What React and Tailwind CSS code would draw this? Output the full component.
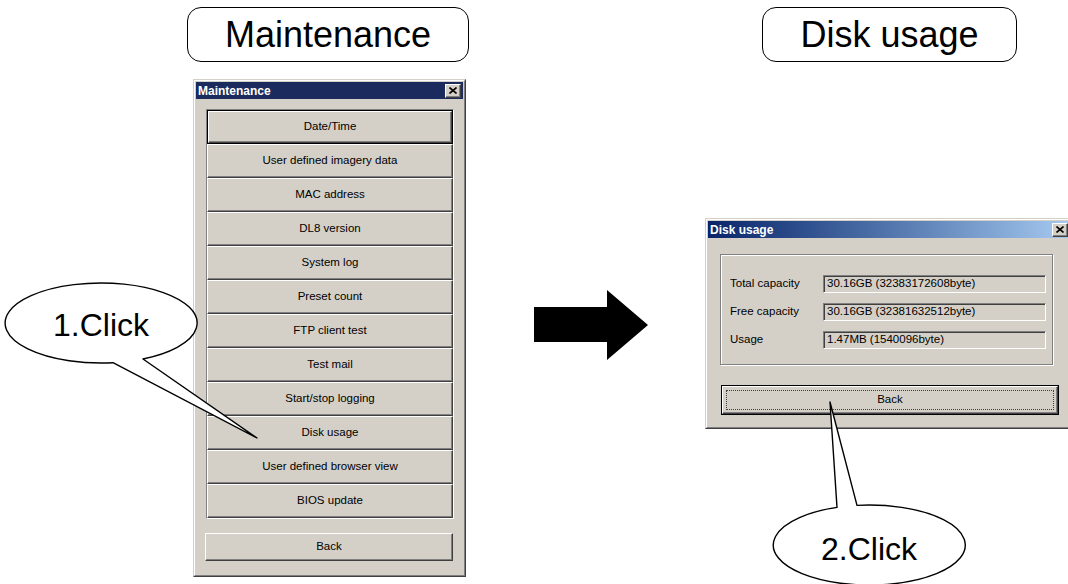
import React from 'react';

const font = "font-['Liberation_Sans',Arial,sans-serif]";

/* classic raised 3D button */
function Btn({ label, def, focus, className = '' }) {
  const face = (
    <div className="flex h-full w-full items-center justify-center bg-[#d4d0c8] border border-t-white border-l-white border-r-[#404040] border-b-[#404040] shadow-[inset_-1px_-1px_0_#808080] text-[11.5px] text-black">
      {focus ? (
        <div className="flex h-[calc(100%-6px)] w-[calc(100%-6px)] items-center justify-center border border-dotted border-[#404040]">
          {label}
        </div>
      ) : (
        label
      )}
    </div>
  );
  if (def) {
    return <div className={`border border-black ${className}`}>{face}</div>;
  }
  return <div className={className}>{face}</div>;
}

function CloseBox() {
  return (
    <div className="flex h-[14px] w-[16px] items-center justify-center bg-[#d4d0c8] border border-t-white border-l-white border-r-[#404040] border-b-[#404040] shadow-[inset_-1px_-1px_0_#808080]">
      <svg width="8" height="7" viewBox="0 0 8 7">
        <path d="M0.5 0.5 L7.5 6.5 M7.5 0.5 L0.5 6.5" stroke="black" strokeWidth="1.6" />
      </svg>
    </div>
  );
}

function Frame({ title, titleBg, className, children }) {
  return (
    <div className={`absolute border border-[#d4d0c8] border-r-[#404040] border-b-[#404040] ${className}`}>
      <div className="flex h-full flex-col border border-white border-r-[#808080] border-b-[#808080] bg-[#d4d0c8] p-px">
        <div className={`flex h-[17px] shrink-0 items-center justify-between pl-[2px] pr-[2px] ${titleBg}`}>
          <span className="text-[12px] font-bold text-white">{title}</span>
          <CloseBox />
        </div>
        {children}
      </div>
    </div>
  );
}

const items = [
  'Date/Time',
  'User defined imagery data',
  'MAC address',
  'DL8 version',
  'System log',
  'Preset count',
  'FTP client test',
  'Test mail',
  'Start/stop logging',
  'Disk usage',
  'User defined browser view',
  'BIOS update',
];

const disk = [
  ['Total capacity', '30.16GB (32383172608byte)'],
  ['Free capacity', '30.16GB (32381632512byte)'],
  ['Usage', '1.47MB (1540096byte)'],
];

export default function App() {
  return (
    <div className={`relative h-[584px] w-[1068px] overflow-hidden bg-white ${font}`}>
      {/* ── Step labels ───────────────────────────────────────── */}
      <div className="absolute left-[187px] top-[7px] flex h-[55px] w-[282px] items-center justify-center rounded-[14px] border-[1.5px] border-black text-[36px] leading-none text-black">
        Maintenance
      </div>
      <div className="absolute left-[762px] top-[7px] flex h-[55px] w-[255px] items-center justify-center rounded-[14px] border-[1.5px] border-black text-[36px] leading-none text-black">
        Disk usage
      </div>

      {/* ── Maintenance window ────────────────────────────────── */}
      <Frame title="Maintenance" titleBg="bg-[#1b2b5d]" className="left-[193px] top-[79px] h-[498px] w-[273px]">
        <div className="ml-[10px] mt-[10px] flex w-[248px] flex-col border border-[#808080] border-r-white border-b-white">
          {items.map((t, i) => (
            <Btn key={t} label={t} def={i === 0} className="h-[34px]" />
          ))}
        </div>
        <Btn label="Back" className="ml-[9px] mt-[14px] h-[28px] w-[248px]" />
      </Frame>

      {/* ── Disk usage window ─────────────────────────────────── */}
      <Frame
        title="Disk usage"
        titleBg="bg-gradient-to-r from-[#0a246a] to-[#a6caf0]"
        className="left-[705px] top-[218px] h-[211px] w-[368px]"
      >
        <div className="ml-[12px] mt-[16px] flex h-[111px] w-[333px] flex-col gap-[10px] border border-[#808080] pl-[9px] pt-[20px] shadow-[1px_1px_0_white,inset_1px_1px_0_white]">
          {disk.map(([k, v]) => (
            <div key={k} className="flex h-[18px] items-center text-[11.5px] text-black">
              <span className="w-[93px]">{k}</span>
              <span className="flex h-[18px] w-[223px] items-center border border-[#808080] border-r-white border-b-white pl-[3px] shadow-[inset_1px_1px_0_#404040]">
                {v}
              </span>
            </div>
          ))}
        </div>
        <Btn label="Back" def focus className="ml-[13px] mt-[20px] h-[30px] w-[338px]" />
      </Frame>

      {/* ── Arrow and callouts ────────────────────────────────── */}
      <svg className="pointer-events-none absolute left-0 top-0" width="1068" height="584" viewBox="0 0 1068 584">
        <polygon points="534,307 607,307 607,290 648,325 607,360 607,342 534,342" fill="black" />

        <path
          d="M143 359 A96 40 0 1 0 113 362.7 L257 438 Z"
          fill="white"
          stroke="black"
          strokeWidth="1.4"
          strokeLinejoin="round"
        />
        <text x="101" y="336" textAnchor="middle" fontSize="32" fontFamily="Liberation Sans, Arial, sans-serif" fill="black">
          1.Click
        </text>

        <path
          d="M837 507.4 L830 402 L857 505.4 A96 40 0 1 1 837 507.4 Z"
          fill="white"
          stroke="black"
          strokeWidth="1.4"
          strokeLinejoin="round"
        />
        <text x="869" y="560" textAnchor="middle" fontSize="32" fontFamily="Liberation Sans, Arial, sans-serif" fill="black">
          2.Click
        </text>
      </svg>
    </div>
  );
}
